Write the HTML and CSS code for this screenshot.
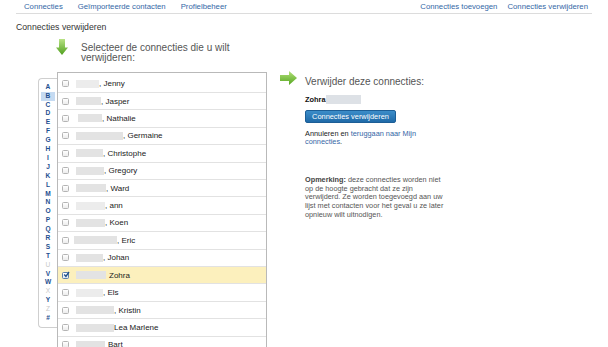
FILE: index.html
```html
<!DOCTYPE html>
<html lang="nl">
<head>
<meta charset="utf-8">
<title>Connecties verwijderen</title>
<link rel="stylesheet" href="styles.css">
</head>
<body>
<nav class="topnav">
  <div class="nav-left">
    <a href="#">Connecties</a>
    <a href="#">Geïmporteerde contacten</a>
    <a href="#">Profielbeheer</a>
  </div>
  <div class="nav-right">
    <a href="#">Connecties toevoegen</a>
    <a href="#">Connecties verwijderen</a>
  </div>
</nav>
<h1 class="page-title">Connecties verwijderen</h1>
<main class="main">
  <section class="left-col">
    <div class="step-head">
      <svg class="arrow-down" width="12" height="16" viewBox="0 0 12 16">
        <defs><linearGradient id="gd" x1="0" y1="0" x2="0" y2="1"><stop offset="0" stop-color="#b9e385"/><stop offset="1" stop-color="#4f9f1d"/></linearGradient></defs>
        <path d="M3 0H9V8.5H12L6 16L0 8.5H3Z" fill="url(#gd)"/>
      </svg>
      <div class="step-title">Selecteer de connecties die u wilt verwijderen:</div>
    </div>
    <div class="picker">
      <ul class="alpha">
        <li>A</li><li class="active">B</li><li>C</li><li>D</li><li>E</li><li>F</li><li>G</li><li>H</li><li>I</li><li>J</li><li>K</li><li>L</li><li>M</li><li>N</li><li>O</li><li>P</li><li>Q</li><li>R</li><li>S</li><li>T</li><li class="off">U</li><li>V</li><li>W</li><li class="off">X</li><li>Y</li><li class="off">Z</li><li>#</li>
      </ul>
      <ul class="list">
        <li class="row"><span class="cb"></span><span class="blur faint w23"></span><span class="nm">, Jenny</span></li>
        <li class="row"><span class="cb"></span><span class="blur w25"></span><span class="nm">, Jasper</span></li>
        <li class="row"><span class="cb"></span><span class="blur w24 ind"></span><span class="nm">, Nathalie</span></li>
        <li class="row"><span class="cb"></span><span class="blur w47"></span><span class="nm">, Germaine</span></li>
        <li class="row"><span class="cb"></span><span class="blur w27"></span><span class="nm">, Christophe</span></li>
        <li class="row"><span class="cb"></span><span class="blur w28"></span><span class="nm">, Gregory</span></li>
        <li class="row"><span class="cb"></span><span class="blur w30"></span><span class="nm">, Ward</span></li>
        <li class="row"><span class="cb"></span><span class="blur faint w29"></span><span class="nm">, ann</span></li>
        <li class="row"><span class="cb"></span><span class="blur w29"></span><span class="nm">, Koen</span></li>
        <li class="row"><span class="cb"></span><span class="blur w43 out"></span><span class="nm">, Eric</span></li>
        <li class="row"><span class="cb"></span><span class="blur w27"></span><span class="nm">, Johan</span></li>
        <li class="row selected"><span class="cb checked"><svg width="7" height="7" viewBox="0 0 7 7"><path d="M1.2 3.6L2.9 5.3L6 1" fill="none" stroke="#1f4f8a" stroke-width="1.4"/></svg></span><span class="blur w30"></span><span class="nm sp">Zohra</span></li>
        <li class="row"><span class="cb"></span><span class="blur faint w27"></span><span class="nm">, Els</span></li>
        <li class="row"><span class="cb"></span><span class="blur w38"></span><span class="nm">, Kristin</span></li>
        <li class="row"><span class="cb"></span><span class="blur w38"></span><span class="nm">Lea Marlene</span></li>
        <li class="row"><span class="cb"></span><span class="blur w29"></span><span class="nm sp">Bart</span></li>
      </ul>
    </div>
  </section>
  <section class="right-col">
    <div class="step-head-right">
      <svg class="arrow-right" width="17" height="14" viewBox="0 0 17 14">
        <defs><linearGradient id="gr" x1="0" y1="0" x2="0" y2="1"><stop offset="0" stop-color="#b3e07a"/><stop offset="1" stop-color="#55a620"/></linearGradient></defs>
        <path d="M0 4H9V0L17 7L9 14V10H0Z" fill="url(#gr)"/>
      </svg>
      <div class="step-title-right">Verwijder deze connecties:</div>
    </div>
    <div class="summary">
      <div class="chosen"><b>Zohra</b><span class="blur-name"></span></div>
      <button class="btn" type="button">Connecties verwijderen</button>
      <p class="cancel">Annuleren en <a href="#">teruggaan naar Mijn connecties</a>.</p>
      <p class="note"><b>Opmerking:</b> deze connecties worden niet op de hoogte gebracht dat ze zijn verwijderd. Ze worden toegevoegd aan uw lijst met contacten voor het geval u ze later opnieuw wilt uitnodigen.</p>
    </div>
  </section>
</main>
</body>
</html>
```

FILE: styles.css
```css
html, body {
  margin: 0;
  padding: 0;
  background: #fff;
  font-family: "Liberation Sans", Arial, Helvetica, sans-serif;
  color: #333;
  overflow: hidden;
}

a {
  color: #3467a6;
  text-decoration: none;
}

.topnav {
  margin: 0 16px;
  height: 13px;
  padding: 0 4px 0 8px;
  border-bottom: 1px solid #dcdcdc;
  display: flex;
  justify-content: space-between;
  align-items: center;
  font-size: 7.75px;
}

.nav-left {
  display: flex;
  gap: 15px;
}

.nav-right {
  display: flex;
  gap: 10px;
}

.page-title {
  margin: 8px 16px 0;
  font-size: 8.7px;
  line-height: 11px;
  font-weight: normal;
  color: #333;
}

.main {
  display: flex;
  align-items: flex-start;
  margin: 6px 0 0 38px;
}

.left-col {
  width: 229px;
  flex: none;
}

.step-head {
  display: flex;
  align-items: flex-start;
  padding-left: 18px;
}

.arrow-down {
  flex: none;
  display: block;
}

.step-title {
  margin: 4px 0 0 13px;
  width: 160px;
  font-size: 10px;
  line-height: 10.4px;
  color: #555;
}

.picker {
  display: flex;
  align-items: flex-start;
  margin-top: 8px;
}

.alpha {
  list-style: none;
  margin: 6px 0 0;
  padding: 4px 0;
  width: 18px;
  border: 1px solid #cfcfcf;
  border-right: none;
  border-radius: 4px 0 0 4px;
  flex: none;
}

.alpha li {
  height: 8.9px;
  line-height: 8.9px;
  text-align: center;
  font-size: 6.6px;
  font-weight: bold;
  color: #1e4f8f;
}

.alpha li.active {
  background: #c6dbf2;
  margin: 0 2px;
}

.alpha li.off {
  color: #c8c8c8;
  font-weight: normal;
}

.list {
  list-style: none;
  margin: 0;
  padding: 2.6px 0 0;
  width: 208px;
  height: 300px;
  border: 1px solid #b9b9b9;
  border-bottom: none;
  flex: none;
}

.row {
  height: 16.43px;
  border-bottom: 1px solid #e2e2e2;
  display: flex;
  align-items: center;
  padding-left: 4px;
  font-size: 8px;
  color: #222;
}

.row.selected {
  background: #fcf0bd;
}

.cb {
  width: 5px;
  height: 5px;
  border: 1px solid #b4b4b4;
  border-radius: 1.5px;
  background: linear-gradient(#ffffff, #ececec);
  flex: none;
  position: relative;
}

.cb.checked {
  border-color: #5a7fae;
  background: linear-gradient(#ffffff, #dfe8f3);
}

.cb.checked svg {
  position: absolute;
  left: -0.5px;
  top: -1.5px;
}

.blur {
  height: 8px;
  margin-left: 7px;
  background: #e3e3e3;
  filter: blur(0.6px);
  flex: none;
}

.blur.faint { background: #ececec; }
.blur.ind { margin-left: 9px; }
.blur.out { margin-left: 5px; }

.w23 { width: 23px; }
.w24 { width: 24px; }
.w25 { width: 25px; }
.w27 { width: 27px; }
.w28 { width: 28px; }
.w29 { width: 29px; }
.w30 { width: 30px; }
.w38 { width: 38px; }
.w43 { width: 43px; }
.w47 { width: 47px; }

.nm.sp { margin-left: 3px; }

.right-col {
  margin: 32px 0 0 13px;
  width: 200px;
}

.step-head-right {
  display: flex;
  align-items: flex-start;
}

.arrow-right {
  flex: none;
  display: block;
}

.step-title-right {
  margin: 5px 0 0 8px;
  font-size: 10px;
  line-height: 12px;
  color: #555;
}

.summary {
  padding-left: 25px;
  width: 141px;
}

.chosen {
  margin-top: 6.8px;
  display: flex;
  align-items: center;
  height: 9px;
  font-size: 7.4px;
  color: #111;
}

.blur-name {
  width: 35px;
  height: 9px;
  background: #dde1e6;
  filter: blur(0.6px);
}

.btn {
  display: block;
  margin-top: 6.2px;
  width: 91px;
  height: 13.3px;
  padding: 0;
  border: 1px solid #1c5e96;
  border-radius: 2px;
  background: linear-gradient(#3c8dc9, #1f6aa8);
  color: #fff;
  font-family: "Liberation Sans", Arial, sans-serif;
  font-size: 7.4px;
  line-height: 11px;
  cursor: pointer;
}

.cancel {
  margin: 6.7px 0 0;
  font-size: 7.35px;
  line-height: 8px;
  color: #222;
}

.note {
  margin: 30px 0 0;
  font-size: 7.3px;
  line-height: 8.7px;
  color: #555;
}

.note b {
  color: #444;
}
```
